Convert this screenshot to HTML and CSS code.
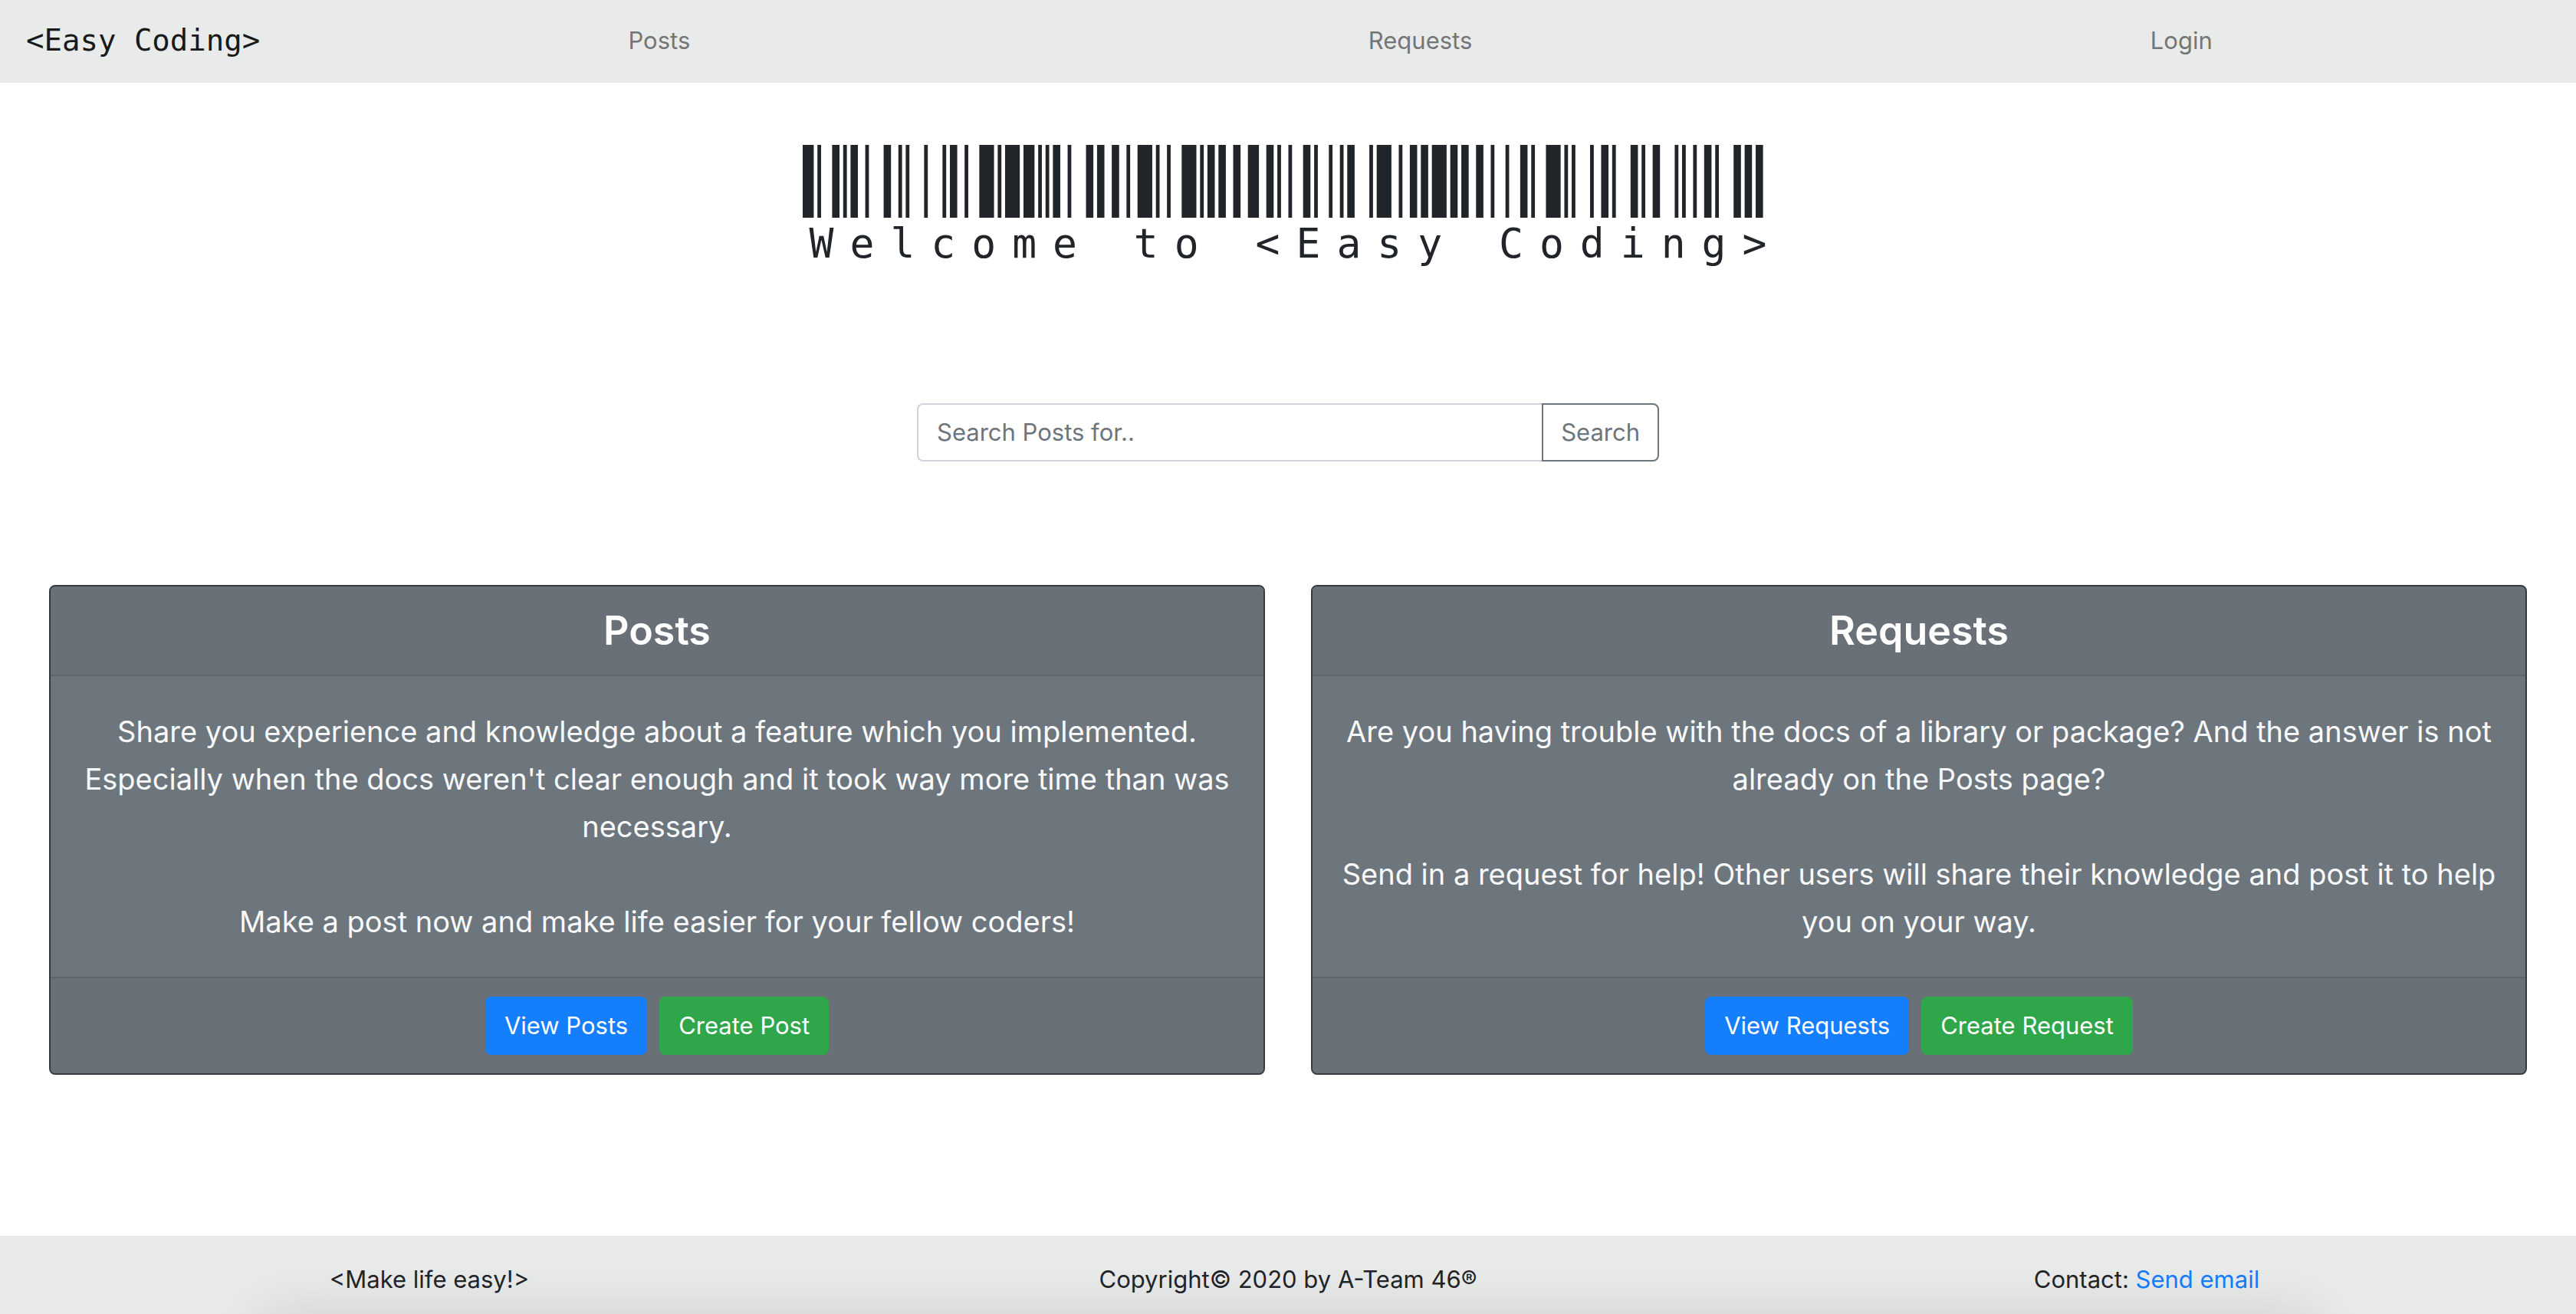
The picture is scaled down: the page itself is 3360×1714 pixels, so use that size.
FILE: index.html
```html
<!DOCTYPE html>
<html lang="en">
<head>
  <meta charset="utf-8">
  <meta name="viewport" content="width=device-width, initial-scale=1">
  <title>Easy Coding</title>
  <link rel="stylesheet" href="styles.css">
</head>
<body>
  <nav class="navbar">
    <a class="brand" href="#">&lt;Easy Coding&gt;</a>
    <ul class="nav-list">
      <li class="nav-item"><a class="nav-link" href="#posts">Posts</a></li>
      <li class="nav-item"><a class="nav-link" href="#requests">Requests</a></li>
      <li class="nav-item"><a class="nav-link" href="#login">Login</a></li>
    </ul>
  </nav>

  <main class="main">
    <h1 class="welcome">
      <!-- Code 128 bars: one row per character, 11 modules each -->
      <svg class="barcode" viewBox="0 0 264 20" preserveAspectRatio="none" aria-hidden="true">
        <path d="M0 10
          h3m1 0h1m3 0h2m1 0
          h1m1 0h2m2 0h1m4 0
          h2m2 0h1m1 0h1m4 0
          h1m4 0h1m1 0h2m2 0
          h1m3 0h4m1 0h1m1 0
          h4m1 0h3m1 0h1m1 0
          h1m1 0h2m2 0h1m4 0
          h2m1 0h2m2 0h2m2 0
          h1m2 0h4m1 0h1m2 0
          h1m3 0h4m1 0h1m1 0
          h2m1 0h2m2 0h2m2 0
          h3m2 0h2m1 0h1m2 0
          h1m3 0h2m1 0h1m3 0
          h1m2 0h1m1 0h2m4 0
          h1m1 0h4m2 0h1m2 0
          h2m1 0h2m1 0h4m1 0
          h2m1 0h2m2 0h2m2 0
          h1m3 0h1m3 0h2m1 0
          h1m3 0h4m1 0h1m1 0
          h1m4 0h1m2 0h2m1 0
          h1m4 0h2m1 0h1m2 0
          h2m4 0h1m1 0h1m2 0
          h1m2 0h2m1 0h1m4 0
          h2m1 0h2m1 0h2"/>
      </svg>
      <span class="welcome-text">Welcome to &lt;Easy Coding&gt;</span>
    </h1>

    <form class="search" role="search">
      <input class="search-input" type="search" placeholder="Search Posts for.." aria-label="Search Posts">
      <button class="search-button" type="submit">Search</button>
    </form>

    <div class="cards">
      <section class="card" id="posts">
        <h2 class="card-header">Posts</h2>
        <div class="card-body">
          <p>Share you experience and knowledge about a feature which you implemented. Especially when the docs weren't clear enough and it took way more time than was necessary.</p>
          <p>Make a post now and make life easier for your fellow coders!</p>
        </div>
        <div class="card-footer">
          <button class="btn btn-primary" type="button">View Posts</button>
          <button class="btn btn-success" type="button">Create Post</button>
        </div>
      </section>
      <section class="card" id="requests">
        <h2 class="card-header">Requests</h2>
        <div class="card-body">
          <p>Are you having trouble with the docs of a library or package? And the answer is not already on the Posts page?</p>
          <p>Send in a request for help! Other users will share their knowledge and post it to help you on your way.</p>
        </div>
        <div class="card-footer">
          <button class="btn btn-primary" type="button">View Requests</button>
          <button class="btn btn-success" type="button">Create Request</button>
        </div>
      </section>
    </div>
  </main>

  <footer class="footer">
    <div class="footer-item">&lt;Make life easy!&gt;</div>
    <div class="footer-item">Copyright© 2020 by A-Team 46®</div>
    <div class="footer-item">Contact: <a class="footer-link" href="#contact">Send email</a></div>
  </footer>
</body>
</html>
```
FILE: styles.css
```css
*,
*::before,
*::after {
  box-sizing: border-box;
}

body {
  margin: 0;
  min-height: 100vh;
  display: flex;
  flex-direction: column;
  background: #fff;
  color: #212529;
  font-family: Inter, "Liberation Sans", sans-serif;
  font-size: 31px;
  line-height: 48px;
}

.navbar {
  display: flex;
  align-items: center;
  padding: 15px 32px 17px 34px;
  min-height: 108px;
  background: #e9ebea;
}

.brand {
  margin-right: 38px;
  color: #181a1a;
  font-family: "DejaVu Sans Mono", monospace;
  font-size: 39px;
  line-height: 60px;
  text-decoration: none;
}

.nav-list {
  display: flex;
  flex: 1;
  margin: 0;
  padding: 0;
  list-style: none;
}

.nav-item {
  flex: 1 1 auto;
  text-align: center;
}

.nav-link {
  color: #747675;
  text-decoration: none;
}

.main {
  padding: 81px 64px 64px;
}

.welcome {
  display: flex;
  flex-direction: column;
  align-items: center;
  margin: 0 0 174px;
  font-weight: 400;
}

.barcode {
  display: block;
  width: 1267px;
  max-width: 100%;
  height: 95px;
  fill: none;
  stroke: #212529;
  stroke-width: 20;
}

/* The tracking gives each letter the width of its 11 bar modules. */
.welcome-text {
  padding-left: 21px;
  font-family: "DejaVu Sans Mono", monospace;
  font-size: 53px;
  line-height: 68px;
  letter-spacing: 21px;
  white-space: nowrap;
}

.search {
  display: flex;
  width: 968px;
  max-width: 100%;
  height: 76px;
  margin: 0 auto 161px;
}

.search-input {
  flex: 1;
  min-width: 0;
  padding: 0 24px;
  border: 2px solid #ced4da;
  border-right: 0;
  border-radius: 8px 0 0 8px;
  background: #fff;
  color: #495057;
  font: inherit;
  appearance: none;
}

.search-input::placeholder {
  color: #6d757d;
  opacity: 1;
}

.search-button {
  padding: 0 23px;
  border: 2px solid #6d757d;
  border-radius: 0 8px 8px 0;
  background: transparent;
  color: #6d757d;
  font: inherit;
}

.cards {
  display: grid;
  grid-template-columns: 1fr 1fr;
  gap: 60px;
}

.card {
  display: flex;
  flex-direction: column;
  overflow: hidden;
  border: 2px solid #343a40;
  border-radius: 8px;
  background: #6d757d;
  color: #f8f9fa;
  text-align: center;
}

.card-header {
  margin: 0;
  padding: 24px 40px;
  border-bottom: 2px solid #5f666d;
  background: #697077;
  color: #fff;
  font-size: 52px;
  font-weight: 600;
  line-height: 67px;
}

.card-body {
  flex: 1;
  padding: 41px 32px;
  font-size: 38px;
  line-height: 62px;
}

.card-body p {
  margin: 0;
}

.card-body p + p {
  margin-top: 62px;
}

.card-footer {
  display: flex;
  justify-content: center;
  gap: 16px;
  padding: 24px 40px;
  border-top: 2px solid #5f666d;
  background: #697077;
}

.btn {
  height: 76px;
  padding: 0 25px;
  border: 0;
  border-radius: 8px;
  color: #fff;
  font: inherit;
}

.btn-primary {
  background: #157efb;
}

.btn-success {
  background: #30a64a;
}

.footer {
  position: relative;
  display: grid;
  grid-template-columns: repeat(3, 1fr);
  align-items: center;
  margin-top: auto;
  padding: 33px 0 21px;
  overflow: hidden;
  background: #e9ebea;
  text-align: center;
}

/* Soft shade rising from the bottom edge. */
.footer::after {
  content: "";
  position: absolute;
  top: 100%;
  left: 340px;
  right: 340px;
  height: 200px;
  box-shadow: 0 0 80px rgba(0, 0, 0, 0.12);
  pointer-events: none;
}

.footer-link {
  color: #157efb;
  text-decoration: none;
}
```
